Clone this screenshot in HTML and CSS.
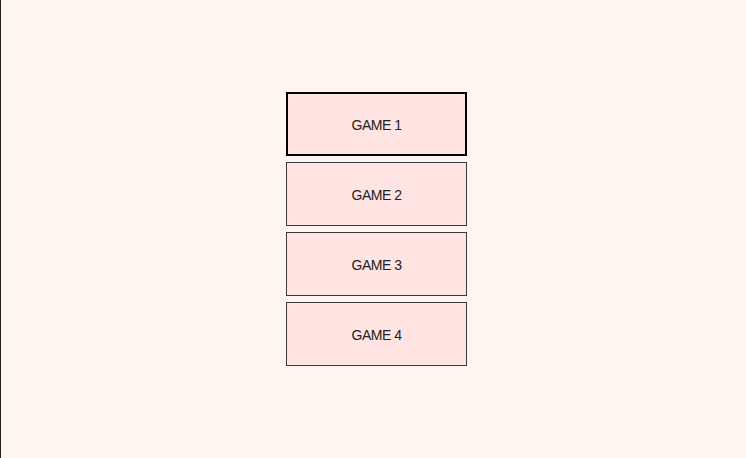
FILE: index.html
```html
<!DOCTYPE html>
<html>
<head>
<meta charset="utf-8">
<link rel="stylesheet" href="styles.css">
</head>
<body>
<div class="page">
  <div class="menu">
    <button class="game active">GAME 1</button>
    <button class="game">GAME 2</button>
    <button class="game">GAME 3</button>
    <button class="game">GAME 4</button>
  </div>
</div>
</body>
</html>
```
FILE: styles.css
```css
html, body {
  margin: 0;
  padding: 0;
  height: 100%;
  background: #fff4ef;
}
.page {
  box-sizing: border-box;
  height: 458px;
  border-left: 1px solid #222;
  padding-top: 92px;
  padding-left: 6px;
  display: flex;
  flex-direction: column;
  align-items: center;
}
.menu {
  display: flex;
  flex-direction: column;
  gap: 6px;
}
.game {
  box-sizing: border-box;
  width: 181px;
  height: 64px;
  margin: 0;
  padding: 2px 0 0 0;
  background: #ffe4e1;
  border: 1px solid #3a3a3a;
  font-family: "Liberation Sans", Arial, sans-serif;
  font-size: 14px;
  letter-spacing: -0.5px;
  color: #222;
  display: flex;
  align-items: center;
  justify-content: center;
}
.game.active {
  border: 2px solid #000;
}
```
